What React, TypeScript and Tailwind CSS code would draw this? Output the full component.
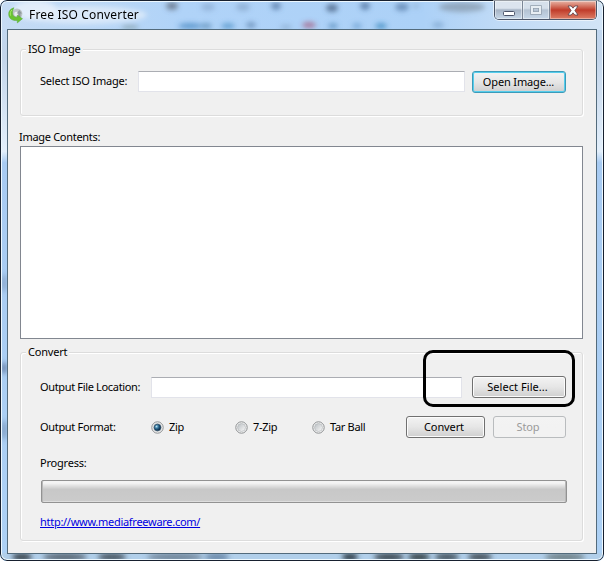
import type { ReactNode } from 'react';

// x, y, rx, ry, colour of the shapes behind the glass frame
const blobs: [number, number, number, number, string][] = [
  [35, 10, 22, 10, '#edf4fc'],
  [85, 15, 62, 9, '#e6f0fb'],
  [172, 6, 6, 4, '#5d6878'],
  [190, 26, 12, 3, '#4788c0'],
  [130, 27, 9, 2, '#7f98a0'],
  [208, 7, 7, 4, '#8eafd2'],
  [206, 26, 6, 3, '#5d8fb8'],
  [228, 26, 7, 3, '#4d92c6'],
  [243, 7, 7, 4, '#88a8cc'],
  [251, 25, 5, 3, '#5e84ad'],
  [276, 6, 5, 4, '#5577a2'],
  [286, 27, 6, 2, '#86a6c8'],
  [309, 25, 7, 3, '#a3577b'],
  [332, 8, 6, 4, '#435b7b'],
  [333, 26, 5, 3, '#5c8fbb'],
  [357, 26, 5, 3, '#6fa1d0'],
  [365, 6, 5, 4, '#4b6d9a'],
  [381, 26, 6, 3, '#3788bd'],
  [402, 7, 7, 4, '#597da9'],
  [416, 6, 3, 2, '#89a9cb'],
  [462, 7, 23, 5, '#8495a7'],
  [438, 25, 6, 3, '#7ca5cf'],
];

const bottomBlobs: [number, number, string][] = [
  [22, 10, '#3f4b55'],
  [65, 22, '#5b6b78'],
  [112, 14, '#4d5b67'],
  [175, 28, '#72879b'],
  [217, 12, '#6e8cab'],
  [350, 8, '#35444f'],
  [389, 15, '#3f4e56'],
  [419, 11, '#3b4850'],
  [447, 12, '#4a5963'],
  [480, 12, '#48555e'],
  [565, 20, '#71838a'],
];

function Glass() {
  return (
    <svg className="absolute inset-0" width="604" height="561">
      <defs>
        <filter id="soft" x="-50%" y="-50%" width="200%" height="200%">
          <feGaussianBlur stdDeviation="2.6" />
        </filter>
        <linearGradient id="side" x1="0" y1="0" x2="0" y2="1">
          <stop offset="0" stopColor="#bfd9f5" />
          <stop offset="0.1" stopColor="#c3d5ea" />
          <stop offset="0.27" stopColor="#e3effb" />
          <stop offset="0.29" stopColor="#a8cbf2" />
          <stop offset="1" stopColor="#add1f5" />
        </linearGradient>
        <linearGradient id="top" x1="0" y1="0" x2="1" y2="0">
          <stop offset="0" stopColor="#c6dcf4" />
          <stop offset="0.3" stopColor="#b0d3f8" />
          <stop offset="0.7" stopColor="#acd1f7" />
          <stop offset="0.82" stopColor="#bfdaf6" />
          <stop offset="1" stopColor="#d2e4f6" />
        </linearGradient>
      </defs>
      <rect width="604" height="561" fill="url(#side)" />
      <rect width="604" height="30" fill="url(#top)" />
      <rect y="553" width="604" height="8" fill="#b1cfea" />
      <g filter="url(#soft)">
        {blobs.map(([x, y, rx, ry, c]) => (
          <ellipse key={`${x}-${y}`} cx={x} cy={y} rx={rx} ry={ry} fill={c} opacity="0.72" />
        ))}
        {bottomBlobs.map(([x, rx, c]) => (
          <ellipse key={x} cx={x} cy="557" rx={rx} ry="4" fill={c} />
        ))}
        <ellipse cx="4" cy="368" rx="3" ry="6" fill="#6b84ab" />
        <ellipse cx="4" cy="430" rx="3" ry="10" fill="#82a0c5" />
        <ellipse cx="4" cy="283" rx="3" ry="9" fill="#8ba9ce" />
      </g>
    </svg>
  );
}

function AppIcon() {
  return (
    <svg width="16" height="17" viewBox="0 0 16 17">
      <circle cx="9" cy="6.800" r="5.400" fill="#bcc4c6" />
      <circle cx="8.500" cy="7" r="2.300" fill="#e9eeee" />
      <path d="M11.300 3l2.700 3.500h-1.500v3.500h-2.300V6.500H8.700z" fill="#8e989b" />
      <path
        d="M6 .8C2.500 1.500.5 4.200.7 7.500c.2 4.200 3.800 6.500 8.600 5.900v2.500l5.200-4.200-5.200-3.600v2.100C6.200 10.400 4.600 8.700 4.500 6.300 4.400 4.200 5 2.200 6 .8z"
        fill="#69c331"
        stroke="#58a83a"
        strokeWidth=".5"
      />
      <path d="M3.900 3C2.300 4.500 1.900 6.500 2.500 8.600" fill="none" stroke="#a5e968" />
    </svg>
  );
}

function CaptionButtons() {
  return (
    <div className="flex h-[19px] w-[103px] overflow-hidden rounded-b-[5px] border border-t-0 border-[#4b5669] shadow-[0_0_0_1px_#ffffff90]">
      <div className="flex w-[28px] items-center justify-center border-r border-[#7c8797] bg-linear-to-b from-[#dce4ee] from-40% via-[#a7b4c5] via-50% to-[#c7d8e9] shadow-[inset_0_0_0_1px_#ffffff70]">
        <svg width="12" height="5" className="mt-[6px]">
          <rect x=".5" y=".5" width="11" height="4" rx="1" fill="#fff" stroke="#4b5368" />
        </svg>
      </div>
      <div className="flex w-[27px] items-center justify-center border-r border-[#7c8797] bg-linear-to-b from-[#d6e0eb] from-40% via-[#b4c2d2] via-50% to-[#c7d8e9] shadow-[inset_0_0_0_1px_#ffffff70]">
        <svg width="12" height="10">
          <rect x="2" y="2" width="8" height="6" fill="none" stroke="#939fac" strokeWidth="3.500" />
          <rect x="2" y="2" width="8" height="6" fill="none" stroke="#e8eef3" strokeWidth="2" />
        </svg>
      </div>
      <div className="flex flex-1 items-center justify-center bg-linear-to-b from-[#e6b3a6] from-0% via-[#c03b2a] via-50% to-[#dd7d66] shadow-[inset_0_0_0_1px_#ffffff60]">
        <svg width="12" height="11" viewBox="0 0 12 11">
          <path
            d="M1 1h3.200L6 3.200 7.800 1H11L7.900 5.500 11 10H7.800L6 7.800 4.200 10H1l3.100-4.500z"
            fill="#fff"
            stroke="#594048"
            strokeWidth=".8"
          />
        </svg>
      </div>
    </div>
  );
}

function Button({ className = '', children }: { className?: string; children: ReactNode }) {
  return (
    <button
      className={`flex h-[22px] items-center justify-center rounded-[3px] border bg-linear-to-b from-[#f3f3f3] from-0% via-[#e6e6e6] via-50% to-[#cfcfcf] whitespace-nowrap ${className}`}
    >
      {children}
    </button>
  );
}

function Radio({ label, checked, className = '' }: { label: string; checked?: boolean; className?: string }) {
  return (
    <label className={`flex items-center gap-[5px] tracking-[-0.3px] ${className}`}>
      <svg width="13" height="13" className="shrink-0">
        <defs>
          <linearGradient id="ring" x1="0" y1="0" x2="1" y2="1">
            <stop offset="0.2" stopColor="#c6cacd" />
            <stop offset="1" stopColor="#fafafa" />
          </linearGradient>
          <radialGradient id="dot" cx="0.35" cy="0.35" r="0.6">
            <stop offset="0" stopColor="#b8e3f4" />
            <stop offset="0.45" stopColor="#36789f" />
            <stop offset="1" stopColor="#0b2d4b" />
          </radialGradient>
        </defs>
        <circle cx="6.500" cy="6.500" r="5.700" fill="#f6f6f6" stroke="#8a8d8f" />
        <circle cx="6.500" cy="6.500" r="4" fill="url(#ring)" stroke="#b3b7ba" strokeWidth=".7" />
        {checked && <circle cx="6.500" cy="6.500" r="3.300" fill="url(#dot)" stroke="#163b58" strokeWidth=".6" />}
      </svg>
      <span>{label}</span>
    </label>
  );
}

function Group({ title, className = '', children }: { title: string; className?: string; children: ReactNode }) {
  return (
    <section className={`relative rounded-[3px] border border-[#dcdcdc] shadow-[inset_1px_1px_0_#fff,1px_1px_0_#fff] ${className}`}>
      <h2 className="absolute -top-[9px] left-[5px] bg-[#f0f0f0] px-[2px] leading-4">{title}</h2>
      {children}
    </section>
  );
}

const input = 'h-[21px] border border-[#e2e3ea] border-t-[#abadb3] bg-white outline-none';

export default function App() {
  return (
    <div className="relative h-[561px] w-[604px] overflow-hidden rounded-[7px] bg-[#b4d4f5] font-['Noto_Sans','Liberation_Sans',sans-serif] text-[11px] tracking-[-0.2px] text-black">
      <Glass />
      <div className="relative flex h-full flex-col rounded-[7px] border border-[#17202f] px-[6px] pb-[7px] shadow-[inset_0_0_0_1px_#edf8ff]">
        <header className="flex h-[28px] shrink-0 items-start">
          <div className="mt-[6px] ml-[1px]">
            <AppIcon />
          </div>
          <h1 className="mt-[5px] ml-[5px] text-[12px] leading-[18px] tracking-[0.17px]">Free ISO Converter</h1>
          <div className="ml-auto">
            <CaptionButtons />
          </div>
        </header>

        <main className="h-[525px] w-[590px] shrink-0 border border-[#536b7c] bg-[#f0f0f0] px-[12px] pt-[19px]">
          <Group title="ISO Image" className="h-[67px] w-[563px]">
            <div className="flex pt-[21px] pl-[19px]">
              <label className="w-[98px] leading-[19px]">Select ISO Image:</label>
              <input className={`${input} w-[327px]`} />
              <Button className="ml-[7px] w-[94px] border-[#3c9bb9] pr-px tracking-[-0.15px] shadow-[inset_0_0_0_1px_#55cdec]">
                Open Image...
              </Button>
            </div>
          </Group>

          <div className="mt-[12px] h-[18px] -ml-px leading-[17px] tracking-[-0.3px]">Image Contents:</div>
          <div className="h-[193px] w-[563px] border border-[#828790] bg-white" />

          <Group title="Convert" className="mt-[13px] h-[189px] w-[563px]">
            <div className="flex pt-[23px] pl-[19px]">
              <label className="w-[111px] leading-[22px] tracking-[-0.34px]">Output File Location:</label>
              <input className={`${input} mt-px w-[311px]`} />
              <Button className="ml-[10px] w-[94px] border-[#707070] pr-[3px] tracking-[0.05px] shadow-[inset_0_0_0_1px_#fcfcfc]">
                Select File...
              </Button>
            </div>
            <div className="mt-[18px] flex pl-[19px]">
              <span className="w-[111px] leading-[22px] tracking-[-0.32px]">Output Format:</span>
              <Radio label="Zip" checked className="w-[84px]" />
              <Radio label="7-Zip" className="w-[77px]" />
              <Radio label="Tar Ball" className="w-[94px]" />
              <Button className="w-[79px] border-[#707070] pr-[3px] tracking-[-0.1px] shadow-[inset_0_0_0_1px_#fcfcfc]">
                Convert
              </Button>
              <Button className="ml-[8px] w-[73px] border-[#b9bcbe] from-[#f2f2f2] via-[#f2f2f2] to-[#f2f2f2] pr-[3px] tracking-[-0.1px] text-[#9a9a9a]">
                Stop
              </Button>
            </div>
            <div className="mt-[16px] pl-[19px] leading-[18px]">Progress:</div>
            <div className="mt-[8px] ml-[20px] h-[23px] w-[526px] rounded-[2px] border border-[#929292] bg-linear-to-b from-[#f4f4f4] from-10% via-[#c8c8c8] via-40% to-[#cbcbcb] shadow-[inset_1px_0_0_#b8b8b8,inset_-1px_0_0_#b8b8b8,inset_0_-1px_0_#dedede]" />
            <a
              href="http://www.mediafreeware.com/"
              className="mt-[10px] ml-[19px] inline-block leading-[18px] tracking-[-0.28px] text-[#0000e0] underline"
            >
              http://www.mediafreeware.com/
            </a>
          </Group>
        </main>
      </div>

      {/* highlight round the output file picker */}
      <div className="pointer-events-none absolute top-[350px] left-[423px] h-[57px] w-[152px] rounded-[10px] border-[3px] border-black" />
    </div>
  );
}
